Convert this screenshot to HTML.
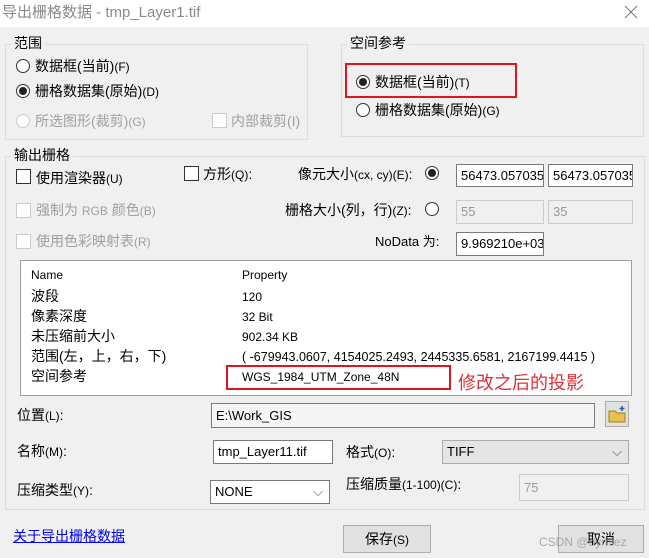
<!DOCTYPE html>
<html><head><meta charset="utf-8"><style>
*{box-sizing:border-box;margin:0;padding:0}
body{width:649px;height:558px;background:#f0f0f0;font-family:"Liberation Sans","Noto Sans CJK SC",sans-serif;font-size:14px;color:#000;position:relative;overflow:hidden}
.a{position:absolute;white-space:nowrap;line-height:18px}
.title{position:absolute;left:0;top:0;width:649px;height:27px;background:#fff}
.grp{position:absolute;border:1px solid #dcdcdc}
.lbl{position:absolute;background:#f0f0f0;padding:0 3px;line-height:18px;white-space:nowrap}
.rad{position:absolute;width:14px;height:14px;border:1px solid #333;border-radius:50%;background:#fff}
.rad.on::after{content:"";position:absolute;left:2px;top:2px;width:8px;height:8px;border-radius:50%;background:#222}
.rad.dis{border-color:#ccc}
.chk{position:absolute;width:15px;height:15px;border:1px solid #333;background:#fff}
.chk.dis{border-color:#ccc}
.inp{position:absolute;border:1px solid #7a7a7a;background:#fff;padding-left:4px;font-size:13px;line-height:21px;white-space:nowrap;overflow:hidden}
.inp.dis{border-color:#ccc;background:#f0f0f0;color:#999}
.dis-t{color:#a0a0a0}
.red{position:absolute;border:2px solid #e0141e}
.btn{position:absolute;border:1px solid #adadad;background:#e1e1e1;text-align:center;line-height:26px}
small{font-size:12px}
</style></head><body>
<div class="title"></div>
<div class="a" style="left:2px;top:4px;font-size:15px;color:#8a8a8a">导出栅格数据 - tmp_Layer1.tif</div>
<svg style="position:absolute;left:624px;top:5px" width="14" height="14"><path d="M1 1L13 13M13 1L1 13" stroke="#777" stroke-width="1"/></svg>

<div class="grp" style="left:5px;top:44px;width:303px;height:96px"></div>
<div class="lbl" style="left:11px;top:34px">范围</div>
<div class="rad" style="left:16px;top:59px"></div><div class="a" style="left:35px;top:57px">数据框(当前)<small>(F)</small></div>
<div class="rad on" style="left:16px;top:84px"></div><div class="a" style="left:35px;top:82px">栅格数据集(原始)<small>(D)</small></div>
<div class="rad dis" style="left:16px;top:114px"></div><div class="a dis-t" style="left:35px;top:112px">所选图形(裁剪)<small>(G)</small></div>
<div class="chk dis" style="left:212px;top:113px"></div><div class="a dis-t" style="left:231px;top:112px">内部裁剪(I)</div>

<div class="grp" style="left:341px;top:44px;width:303px;height:93px"></div>
<div class="lbl" style="left:347px;top:34px">空间参考</div>
<div class="red" style="left:345px;top:63px;width:172px;height:35px"></div>
<div class="rad on" style="left:356px;top:75px"></div><div class="a" style="left:375px;top:73px">数据框(当前)<small>(T)</small></div>
<div class="rad" style="left:356px;top:103px"></div><div class="a" style="left:375px;top:101px">栅格数据集(原始)<small>(G)</small></div>

<div class="grp" style="left:5px;top:156px;width:640px;height:354px"></div>
<div class="lbl" style="left:11px;top:146px">输出栅格</div>
<div class="chk" style="left:16px;top:169px"></div><div class="a" style="left:36px;top:169px">使用渲染器<small>(U)</small></div>
<div class="chk" style="left:184px;top:166px"></div><div class="a" style="left:203px;top:165px">方形<small>(Q)</small>:</div>
<div class="a" style="left:298px;top:165px">像元大小<small>(cx, cy)(E)</small>:</div>
<div class="rad on" style="left:425px;top:166px"></div>
<div class="inp" style="left:456px;top:164px;width:88px;height:23px">56473.057035</div>
<div class="inp" style="left:548px;top:164px;width:85px;height:23px">56473.057035</div>
<div class="chk dis" style="left:16px;top:203px"></div><div class="a dis-t" style="left:36px;top:201px">强制为 <small>RGB</small> 颜色<small>(B)</small></div>
<div class="a" style="left:285px;top:201px">栅格大小(列，行)<small>(Z)</small>:</div>
<div class="rad" style="left:425px;top:202px"></div>
<div class="inp dis" style="left:456px;top:200px;width:88px;height:24px">55</div>
<div class="inp dis" style="left:548px;top:200px;width:85px;height:24px">35</div>
<div class="chk dis" style="left:16px;top:234px"></div><div class="a dis-t" style="left:36px;top:232px">使用色彩映射表<small>(R)</small></div>
<div class="a" style="left:375px;top:233px;font-size:13px">NoData 为:</div>
<div class="inp" style="left:456px;top:232px;width:88px;height:24px">9.969210e+03</div>

<div style="position:absolute;left:20px;top:260px;width:612px;height:136px;background:#fff;border:1px solid #a0a0a0"></div>
<div class="a" style="left:31px;top:266px;font-size:12px">Name</div>
<div class="a" style="left:242px;top:266px;font-size:12px">Property</div>
<div class="a" style="left:31px;top:287px">波段</div><div class="a" style="left:242px;top:288px;font-size:12px">120</div>
<div class="a" style="left:31px;top:307px">像素深度</div><div class="a" style="left:242px;top:308px;font-size:12px">32 Bit</div>
<div class="a" style="left:31px;top:327px">未压缩前大小</div><div class="a" style="left:242px;top:328px;font-size:12px">902.34 KB</div>
<div class="a" style="left:31px;top:347px">范围(左，上，右，下)</div><div class="a" style="left:242px;top:348px;font-size:12.5px">( -679943.0607, 4154025.2493, 2445335.6581, 2167199.4415 )</div>
<div class="a" style="left:31px;top:367px">空间参考</div><div class="a" style="left:242px;top:368px;font-size:12px">WGS_1984_UTM_Zone_48N</div>
<div class="red" style="left:226px;top:365px;width:225px;height:25px"></div>
<div class="a" style="left:458px;top:374px;font-size:18px;color:#e0303a">修改之后的投影</div>

<div class="a" style="left:17px;top:406px">位置<small>(L)</small>:</div>
<div class="inp" style="left:211px;top:403px;width:384px;height:25px;background:#f5f5f5;line-height:23px">E:\Work_GIS</div>
<div style="position:absolute;left:605px;top:401px;width:24px;height:26px;border:1px solid #adadad;background:#e1e1e1"><svg width="22" height="24" viewBox="0 0 22 24"><path d="M3 9h6l2 2h8v9H3z" fill="#e8c14a" stroke="#a0802a"/><path d="M16 4v5M13.5 6.5h5" stroke="#2a5fa0" stroke-width="1.6"/></svg></div>

<div class="a" style="left:17px;top:442px">名称<small>(M)</small>:</div>
<div class="inp" style="left:213px;top:440px;width:120px;height:24px">tmp_Layer11.tif</div>
<div class="a" style="left:346px;top:443px">格式<small>(O)</small>:</div>
<div class="inp" style="left:442px;top:440px;width:187px;height:24px;background:#e5e5e5;border-color:#adadad">TIFF<span style="position:absolute;right:6px;color:#555">⌵</span></div>

<div class="a" style="left:17px;top:481px">压缩类型<small>(Y)</small>:</div>
<div class="inp" style="left:210px;top:480px;width:120px;height:24px">NONE<span style="position:absolute;right:6px;color:#555">⌵</span></div>
<div class="a" style="left:346px;top:475px">压缩质量<small>(1-100)(C)</small>:</div>
<div class="inp dis" style="left:519px;top:474px;width:110px;height:27px;line-height:25px">75</div>

<div class="a" style="left:13px;top:527px;color:#0000ee;text-decoration:underline">关于导出栅格数据</div>
<div class="btn" style="left:343px;top:525px;width:88px;height:28px">保存<small>(S)</small></div>
<div class="btn" style="left:558px;top:525px;width:86px;height:28px">取消</div>
<div class="a" style="left:539px;top:533px;font-size:12px;color:#999;opacity:.8">CSDN @dymiez</div>
</body></html>
